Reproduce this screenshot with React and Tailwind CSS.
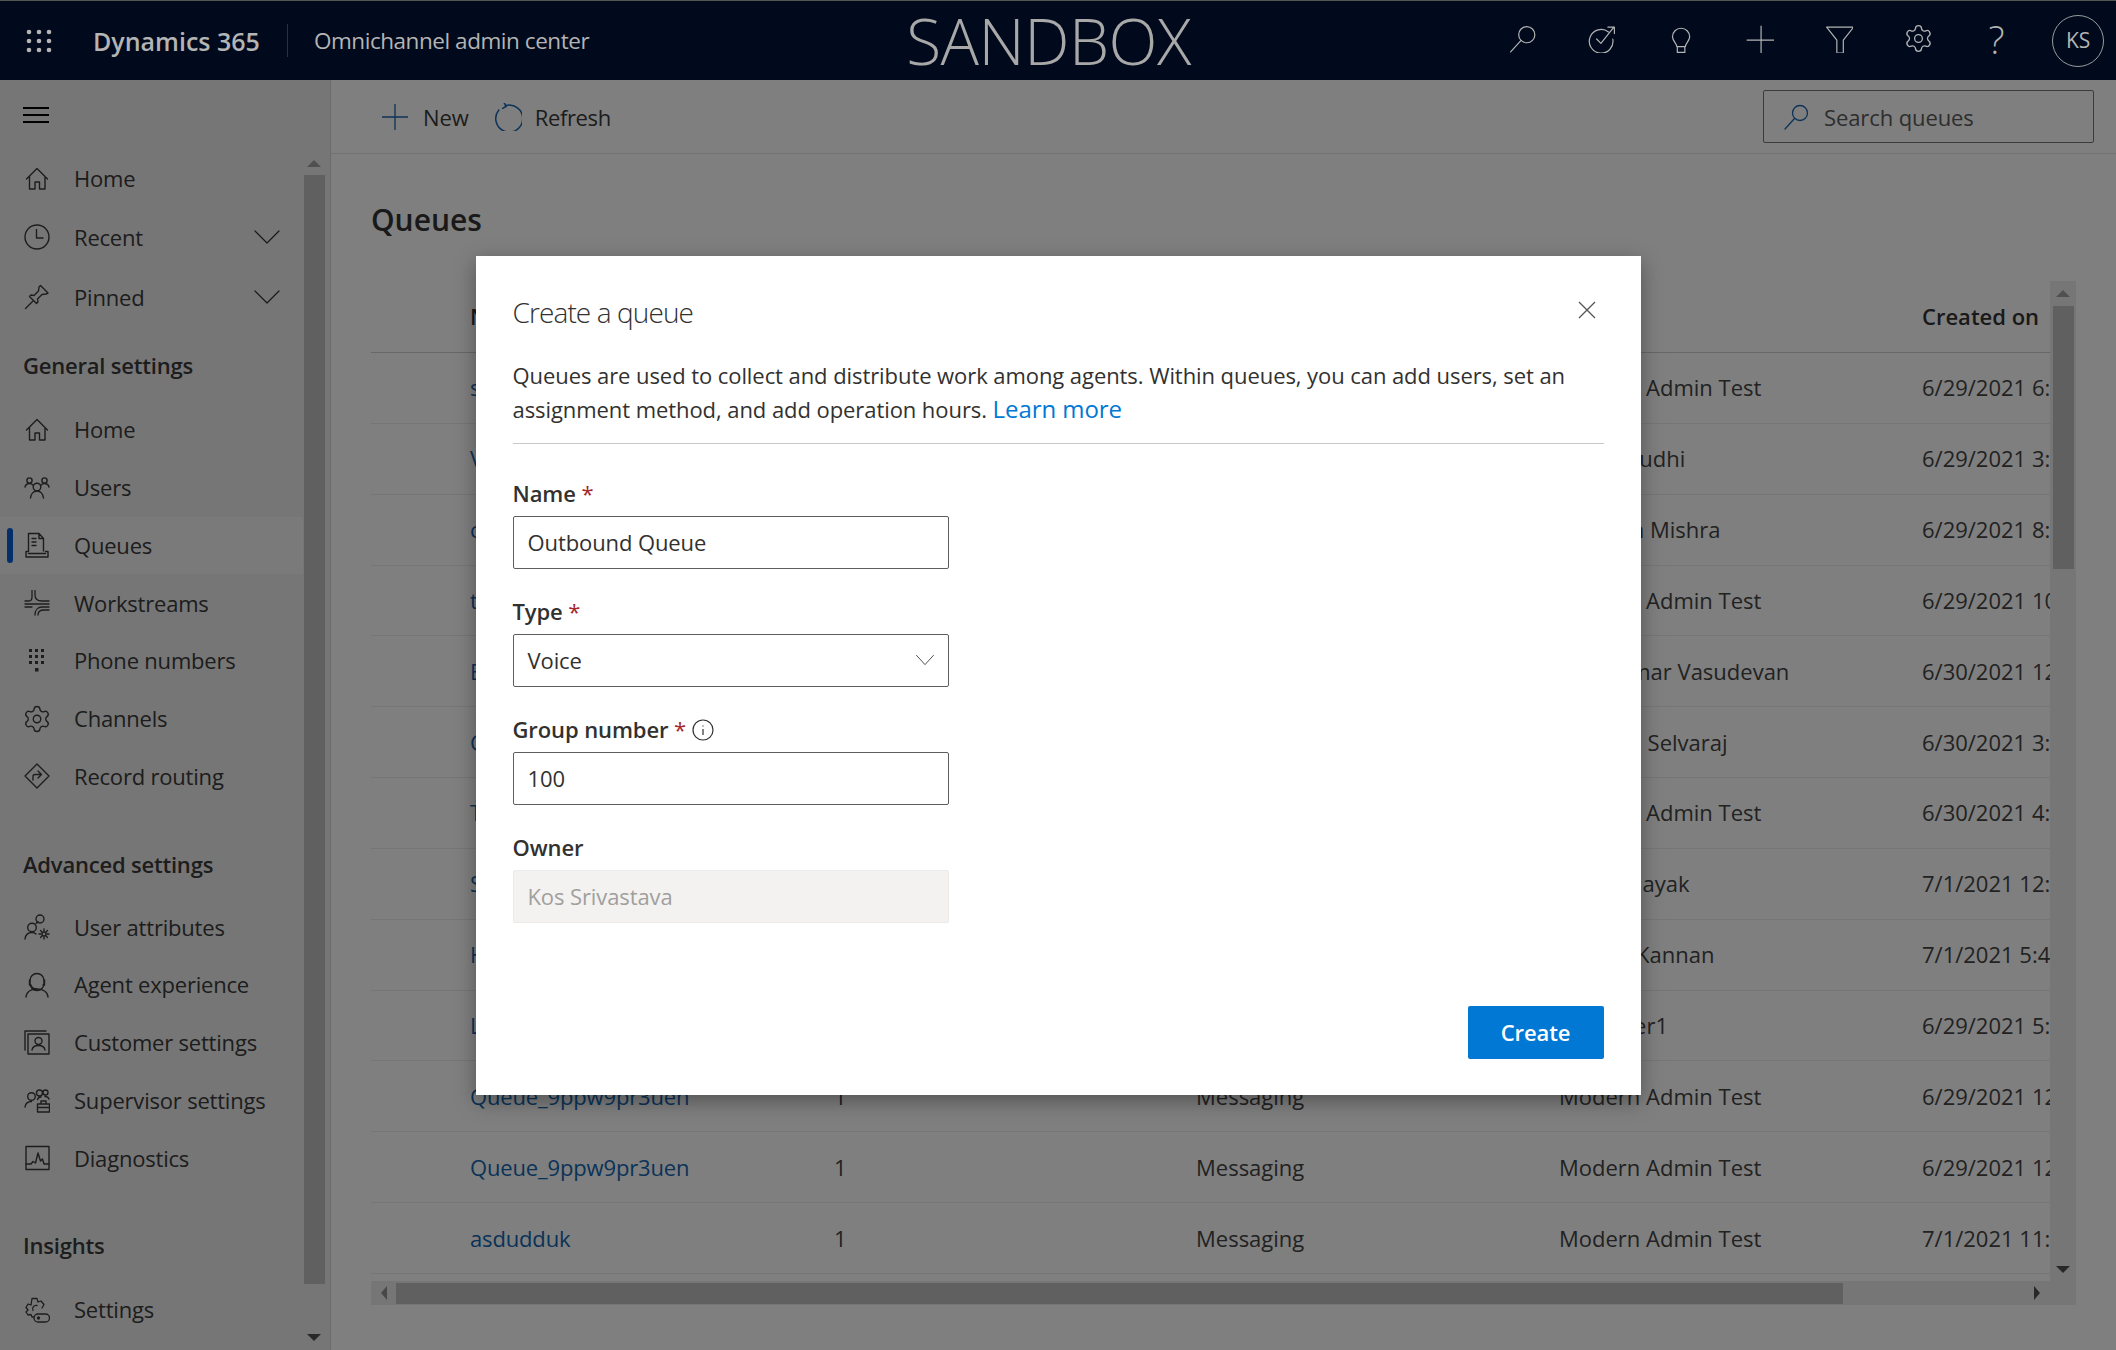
import React from "react";
import { Settings as Gear } from "lucide-react";

const Svg = ({ s = 26, sw = 1.4, c = "", vb = 26, children }) => (
  <svg width={s} height={s} viewBox={`0 0 ${vb} ${vb}`} fill="none" stroke="currentColor" strokeWidth={sw} strokeLinecap="round" strokeLinejoin="round" className={"shrink-0 " + c}>{children}</svg>
);

const icons = {
  home: <Svg><path d="M2.5 13 13 2.5 23.5 13M5.5 10.5V23H11v-7h4.5v7H21V10.5" /></Svg>,
  recent: <Svg><circle cx="13" cy="13" r="12" /><path d="M12.5 5.5v8.5H19" /></Svg>,
  pin: <Svg><path d="M16.5 1.5 24 9l-2 1-4 .5-4.5 4.5.5 3-1.5 1.5-7-7L7 11l3 .5L14.500 7 15 3ZM9 17l-7.500 7.500" /></Svg>,
  users: <Svg><circle cx="13" cy="12" r="3.800" /><path d="M6.500 23c.5-4 3-7 6.500-7s6 3 6.500 7" /><circle cx="5.500" cy="5.500" r="2.600" /><circle cx="20.500" cy="5.500" r="2.600" /><path d="M1 12c.5-2 2-3.500 4.500-3.500 1.500 0 2.500.5 3.500 1.500M25 12c-.5-2-2-3.500-4.500-3.500-1.500 0-2.500.5-3.500 1.500" /></Svg>,
  queues: <Svg><path d="M4.500 19V1.500h10.500l4.500 5V19M15 1.500v5h4.500M8 6.500h4M8 10h4M8 13.500h4" /><path d="M4.500 19.500H2V25h22v-5.500h-2.500M4.500 21.500h17" /></Svg>,
  work: <Svg sw={1.3}><path d="M1 11h4c2 0 3-2 3-4V.5M11 .5V5c0 4 3 6 7 6h7M1 14h24M25 17h-7c-4 0-7 3-7 8M25 20h-5c-4 0-6 2-6 5M1 17h7" /></Svg>,
  phone: <svg width="26" height="26" viewBox="0 0 26 26" className="shrink-0" fill="currentColor">{[5,11,17].flatMap(x=>[1,7,13].map(y=><rect key={x+"-"+y} x={x} y={y} width="3" height="3"/>))}<rect x="11" y="20" width="3.500" height="3.500"/></svg>,
  gear: <Gear size={30} strokeWidth={1.1} className="-m-[2px] shrink-0" />,
  route: <Svg><path d="M13 1 25 13 13 25 1 13ZM9 17v-3.500c0-1 1-2 2-2h6M14 8l3.500 3.500L14 15" /></Svg>,
  attrs: <Svg><circle cx="16" cy="5" r="4" /><circle cx="8" cy="13.500" r="4.300" /><path d="M1 25c.5-4 3-6.500 7-6.500 1.500 0 3 .5 4 1.500M12 9.500c1-.8 2-2 2-2" /><circle cx="20" cy="20" r="2" /><path d="M20 15v2M20 23v2M15 20h2M23 20h2M16.500 16.500l1.500 1.500M22 22l1.500 1.500M16.500 23.500 18 22M22 18l1.500-1.500" /></Svg>,
  agent: <Svg><path d="M6 11.500a7 7 0 0 0 14 0V8.500a7 7 0 0 0-14 0Z" /><path d="M6 8h-.5v5H7M20 8h.5v5H19M7 13.500c1 2.500 3 3.500 5.500 3.500" /><path d="M2 25c.5-5 5-8 11-8s10.500 3 11 8" /></Svg>,
  customer: <Svg><path d="M1 20V1h21M4 24V4h21v20Z" /><circle cx="14.500" cy="11" r="3.500" /><path d="M8 20c.5-3 3-4.500 6.500-4.500S20.500 17 21 20" /></Svg>,
  supervisor: <Svg><circle cx="7.500" cy="9.500" r="3.800" /><path d="M1 20c.5-3.500 3-5.500 6.500-5.500M12.500 6a3 3 0 1 0 6 0 3 3 0 1 0-6 0ZM19 5.500a2.500 2.500 0 1 0 5 0 2.500 2.500 0 1 0-5 0ZM25 12c-.5-1.500-2-2.500-4-2.500M17 10c-1.500 0-3 1-3.500 2.500" /><path d="M13.500 17h12v8h-12ZM17 17v-3h5v3M13.500 20.500h12" /></Svg>,
  diag: <Svg><path d="M2 1.500h23v23H2Z" /><path d="M2 19h5l2-2.500 2.500 1.500 2.500-10 2.500 8 2-2 1.500 5H25" /></Svg>,
  tune: <Svg sw={1.3}><path d="M10 20H8l-1-2.500-3 .5-2-3 2-2-2-2.500 2-3.500 3 1L8 1.500h5l1 3.500 3-1 3 3.500-2 3.500M13 8.500a3.500 3.500 0 0 0-4 5" /><rect x="10" y="17" width="15.500" height="8" rx="4" /><circle cx="14.500" cy="21" r="1" fill="currentColor" /></Svg>,
};

const Row = ({ icon, label, active, chev, h = "h-[57.75px]" }) => (
  <div className={`relative flex items-center pl-[24px] ${h} ${active ? "bg-[#f5f5f5]" : ""}`}>
    {active && <div className="absolute left-[7px] top-[11px] h-[35px] w-[6px] rounded-[3px] bg-[#0b5fd4]" />}
    <span className="flex w-[50px]">{icons[icon]}</span>
    <span className="flex-1 text-[#3a3a3a]">{label}</span>
    {chev && <Svg s={26} sw={1.2} c="mr-[23px] text-[#333]"><path d="M1 7 13 19 25 7" /></Svg>}
  </div>
);
const Heading = ({ children, c }) => <div className={`h-[28px] pl-[23px] font-semibold leading-[28px] text-[#3a3a3a] ${c}`}>{children}</div>;

const Arrow = ({ dir, c = "" }) => {
  const m = { u: "border-x-[7px] border-x-transparent border-b-[7px] border-b-[#a0a0a0]", d: "border-x-[7px] border-x-transparent border-t-[7px] border-t-[#505050]", l: "border-y-[7px] border-y-transparent border-r-[6px] border-r-[#909090]", r: "border-y-[7px] border-y-transparent border-l-[6px] border-l-[#505050]" };
  return <div className={`h-0 w-0 ${m[dir]} ${c}`} />;
};

const rows = [
  ["sample queue", "Modern Admin Test", "6/29/2021 6:12 PM"],
  ["Voice queue", "Ranya Sudhi", "6/29/2021 3:40 PM"],
  ["chat queue", "Shailesh Mishra", "6/29/2021 8:05 PM"],
  ["test queue", "Modern Admin Test", "6/29/2021 10:21 PM"],
  ["Email queue", "Ramkumar Vasudevan", "6/30/2021 12:33 PM"],
  ["Case queue", "Vasanth Selvaraj", "6/30/2021 3:18 PM"],
  ["Test queue", "Modern Admin Test", "6/30/2021 4:44 PM"],
  ["SMS queue", "Varun Nayak", "7/1/2021 12:02 PM"],
  ["Help queue", "Dinesh Kannan", "7/1/2021 5:47 PM"],
  ["Live queue", "Test User1", "6/29/2021 5:09 PM"],
  ["Queue_9ppw9pr3uen", "Modern Admin Test", "6/29/2021 12:16 PM"],
  ["Queue_9ppw9pr3uen", "Modern Admin Test", "6/29/2021 12:15 PM"],
  ["asdudduk", "Modern Admin Test", "7/1/2021 11:30 AM"],
];
const cols = "grid grid-cols-[99px_364px_362px_363px_363px_128px] items-center";

const Field = ({ label, req, info, children }) => (
  <div>
    <div className="flex h-[39px] items-center gap-[6px] pb-[5px] font-semibold text-[#323130]">
      <span>{label}{req && <span className="font-normal text-[#a4262c]"> *</span>}</span>
      {info && <svg width="22" height="22" viewBox="0 0 22 22" fill="none" stroke="#323130" strokeWidth="1.200"><circle cx="11" cy="11" r="10" /><path d="M11 10v6M11 6.500v1" /></svg>}
    </div>
    {children}
  </div>
);
const boxCls = "h-[53px] w-[436px] rounded-[2px] border border-[#605e5c] flex items-center px-[14px] text-[#323130]";

export default function App() {
  return (
    <div className="relative flex h-[1350px] w-[2116px] flex-col overflow-hidden bg-white text-[22px] tracking-[-0.1px] text-[#3a3a3a]" style={{ fontFamily: '"Open Sans", sans-serif' }}>
      {/* Header */}
      <header className="relative z-20 flex h-[80px] shrink-0 items-center border-t border-t-[#555] bg-[#000a1c] text-[#b4b4b4]">
        <svg width="26" height="24" viewBox="0 0 26 24" className="ml-[26px] shrink-0" fill="currentColor">{[3,13,23].flatMap(x=>[3,12,21].map(y=><circle key={x+"-"+y} cx={x} cy={y} r="2.300"/>))}</svg>
        <span className="ml-[41px] pt-[2px] text-[25px] font-semibold leading-none tracking-normal">Dynamics 365</span>
        <div className="ml-[27px] h-[33px] w-px bg-[#2a3240]" />
        <span className="ml-[26px] pt-[2px] text-[22.5px] leading-none tracking-[-0.45px]">Omnichannel admin center</span>
        <span className="ml-[317px] text-[64px] font-light leading-none tracking-[-0.5px] text-[#a8a8a8]">SANDBOX</span>
        <div className="ml-auto flex items-center text-[#b4b4b4]">
          <div className="mb-[4px] flex w-[79px] justify-center"><Svg s={28} sw={1.100}><circle cx="16.500" cy="9" r="7.500" /><path d="M11 14.500 1.500 25" /></Svg></div>
          <div className="mb-[4px] flex w-[79px] justify-center"><Svg s={28} sw={1.100}><path d="M19 6.500A11 11 0 1 0 23 13" /><path d="m8 13 4 4L24 2M18.500 2H24.500V8" /></Svg></div>
          <div className="mb-[4px] flex w-[79px] justify-center"><Svg s={28} sw={1.100} c="-ml-[2px]"><path d="M10 20c0-3-3.500-4.500-4-9a8 8 0 1 1 16 0c-.5 4.500-4 6-4 9ZM10.500 20v5.500h7V20" /></Svg></div>
          <div className="mb-[4px] flex w-[79px] justify-center"><Svg s={28} sw={1.100}><path d="M14 1v26M1 14h26" /></Svg></div>
          <div className="mb-[4px] flex w-[79px] justify-center"><Svg s={28} sw={1.100}><path d="M1.500 2h25l-9.500 12v12h-6V14Z" /></Svg></div>
          <div className="mb-[4px] flex w-[79px] justify-center"><Gear size={31} strokeWidth={1} className="ml-[2px]" /></div>
          <div className="mb-[4px] flex w-[79px] justify-center text-[38px] font-light leading-none">?</div>
          <div className="ml-[16px] mr-[12px] flex h-[52px] w-[52px] items-center justify-center rounded-full border border-[#9a9a9a] text-[21px]">KS</div>
        </div>
      </header>

      <div className="flex min-h-0 flex-1">
        {/* Sidebar */}
        <aside className="flex w-[331px] shrink-0 border-r border-r-[#d8d8d8] bg-[#ededed] tracking-[-0.2px]">
          <nav className="w-[303px] shrink-0 overflow-hidden">
            <div className="flex h-[70px] items-center pl-[23px]">
              <svg width="26" height="18" viewBox="0 0 26 18" stroke="#000" strokeWidth="2"><path d="M0 2h26M0 9h26M0 16h26" /></svg>
            </div>
            <Row icon="home" label="Home" h="h-[57px]" />
            <Row icon="recent" label="Recent" chev h="h-[60px]" />
            <Row icon="pin" label="Pinned" chev h="h-[60px]" />
            <Heading c="mt-[24px] mb-[22px]">General settings</Heading>
            <Row icon="home" label="Home" />
            <Row icon="users" label="Users" />
            <Row icon="queues" label="Queues" active />
            <Row icon="work" label="Workstreams" />
            <Row icon="phone" label="Phone numbers" />
            <Row icon="gear" label="Channels" />
            <Row icon="route" label="Record routing" />
            <Heading c="mt-[45px] mb-[20px]">Advanced settings</Heading>
            <Row icon="attrs" label="User attributes" />
            <Row icon="agent" label="Agent experience" />
            <Row icon="customer" label="Customer settings" />
            <Row icon="supervisor" label="Supervisor settings" />
            <Row icon="diag" label="Diagnostics" />
            <Heading c="mt-[44px] mb-[22px]">Insights</Heading>
            <Row icon="tune" label="Settings" />
          </nav>
          <div className="flex w-[27px] flex-col items-center pt-[80px] pr-[5px]">
            <Arrow dir="u" />
            <div className="mt-[8px] h-[1109px] w-[21px] bg-[#c0c0c0]" />
            <Arrow dir="d" c="mt-[50px]" />
          </div>
        </aside>

        {/* Main */}
        <main className="min-w-0 flex-1">
          <div className="flex h-[74px] items-center border-b border-b-[#e5e5e5] pl-[51px] pr-[22px]">
            <Svg s={26} sw={1.300} c="text-[#1a66b0]"><path d="M13 0v26M0 13h26" /></Svg>
            <span className="ml-[15px] pt-[2px]">New</span>
            <Svg s={28} sw={1.400} c="ml-[25px] text-[#1a66b0]"><path d="M4.500 6.500A12.500 12.500 0 1 0 10.500 2.500M9.500 0l2 3-3.500 2" /></Svg>
            <span className="ml-[13px] pt-[2px] tracking-[-0.35px]">Refresh</span>
            <div className="ml-auto flex h-[53px] w-[331px] items-center rounded-[2px] border border-[#777] pl-[20px]">
              <Svg s={26} sw={1.300} c="text-[#1a66b0]"><circle cx="16" cy="9" r="7.500" /><path d="M10.500 14.500 1 25" /></Svg>
              <span className="ml-[14px] pt-[2px] text-[#5c5c5c]">Search queues</span>
            </div>
          </div>
          <div className="pl-[40px]">
            <h1 className="mt-[46px] h-[40px] text-[30px] font-semibold leading-[40px] tracking-normal text-[#333]">Queues</h1>
            <div className="mt-[41px] w-[1705px]">
              <div className="flex">
                <div className="w-[1679px] overflow-hidden whitespace-nowrap tracking-normal">
                  <div className={`${cols} h-[72px] border-b border-b-[#cfcfcf] font-semibold text-[#333]`}>
                    <span /><span>Name</span><span>Group number</span><span>Type</span><span>Owner</span><span>Created on</span>
                  </div>
                  {rows.map((r, i) => (
                    <div key={i} className={`${cols} h-[70.85px] border-b border-b-[#ececec] text-[#444]`}>
                      <span />
                      <span className="tracking-[-0.15px] text-[#1466b0]">{r[0]}</span>
                      <span>1</span>
                      <span>Messaging</span>
                      <span>{r[1]}</span>
                      <span className="overflow-hidden">{r[2]}</span>
                    </div>
                  ))}
                </div>
                <div className="flex h-[1000px] w-[26px] flex-col items-center bg-[#ececec]">
                  <div className="mt-[9px]"><Arrow dir="u" /></div>
                  <div className="mt-[9px] h-[263px] w-[21px] bg-[#c0c0c0]" />
                  <Arrow dir="d" c="mt-[697px]" />
                </div>
              </div>
              <div className="flex h-[24px] w-[1705px] items-center bg-[#ececec]">
                <div className="flex w-[25px] justify-center"><Arrow dir="l" /></div>
                <div className="h-[21px] w-[1447px] bg-[#c0c0c0]" />
                <Arrow dir="r" c="ml-[191px]" />
              </div>
            </div>
          </div>
        </main>
      </div>

      {/* Modal */}
      <div className="absolute inset-0 z-10 flex items-center justify-center bg-black/50">
        <div className="relative h-[839px] w-[1165px] bg-white px-[37px] shadow-[0_6px_20px_rgba(0,0,0,0.35)]">
          <h2 className="mt-[35px] h-[42px] text-[28px] font-[350] leading-[42px] tracking-[-0.9px] text-[#323130]">Create a queue</h2>
          <svg width="18" height="18" viewBox="0 0 18 18" stroke="#555" strokeWidth="1.300" className="absolute right-[45px] top-[45px]"><path d="M1 1l16 16M17 1 1 17" /></svg>
          <p className="mt-[25px] border-b border-b-[#c8c8c8] pb-[17px] leading-[34px] tracking-[-0.07px] text-[#323130]">
            Queues are used to collect and distribute work among agents. Within queues, you can add users, set an<br />assignment method, and add operation hours. <span className="text-[24px] text-[#0078d4]">Learn more</span>
          </p>
          <div className="mt-[33px] flex flex-col gap-[26px]">
            <Field label="Name" req><div className={boxCls}>Outbound Queue</div></Field>
            <Field label="Type" req><div className={boxCls}><span className="flex-1">Voice</span><Svg s={20} sw={1.100} c="mr-[-1px]"><path d="M2 7 13 19 24 7" /></Svg></div></Field>
            <Field label="Group number" req info><div className={boxCls}>100</div></Field>
            <Field label="Owner"><div className="flex h-[53px] w-[436px] items-center rounded-[2px] border border-[#edebe9] bg-[#f3f2f1] px-[14px] text-[#a19f9d]">Kos Srivastava</div></Field>
          </div>
          <div className="absolute bottom-[36px] right-[37px] flex h-[53px] w-[136px] items-center justify-center rounded-[2px] bg-[#0078d4] font-semibold text-white">Create</div>
        </div>
      </div>
    </div>
  );
}
